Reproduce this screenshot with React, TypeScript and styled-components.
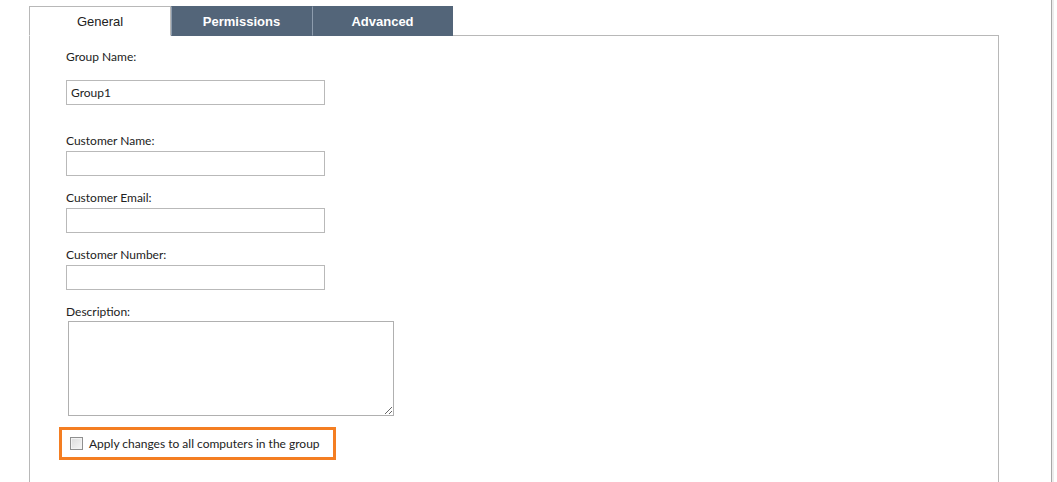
import styled, { createGlobalStyle } from "styled-components";

const GlobalStyle = createGlobalStyle`
  html, body {
    margin: 0;
    padding: 0;
    background: #ffffff;
  }
  body {
    font-family: "Segoe UI", Lato, "Open Sans", sans-serif;
  }
`;

const Page = styled.div`
  width: 1052px;
  min-height: 482px;
  padding: 6px 0 0 29px;
  box-sizing: border-box;
  border-right: 1px solid #a8a8a8;
  box-shadow: 2px 0 0 #ececec;
`;

const TabBar = styled.div`
  display: flex;
  position: relative;
  z-index: 1;
  margin-bottom: -1px;
`;

const Tab = styled.div<{ $active?: boolean }>`
  width: ${(p) => (p.$active ? "142px" : "141px")};
  height: 30px;
  box-sizing: border-box;
  display: flex;
  align-items: center;
  justify-content: center;
  font-family: "Liberation Sans", Arial, sans-serif;
  font-size: 13px;
  padding-top: 1px;
  background: ${(p) => (p.$active ? "#ffffff" : "#536579")};
  color: ${(p) => (p.$active ? "#222222" : "#ffffff")};
  font-weight: ${(p) => (p.$active ? "normal" : "bold")};
  border: 1px solid ${(p) => (p.$active ? "#b8b8b8" : "#536579")};
  border-bottom-color: ${(p) => (p.$active ? "#ffffff" : "#536579")};
  & + & {
    border-left-color: #8d9cad;
  }
`;

const Panel = styled.div`
  width: 970px;
  min-height: 450px;
  box-sizing: border-box;
  border: 1px solid #b8b8b8;
  border-bottom: none;
  padding: 13px 0 0 36px;
  font-size: 12px;
  color: #222222;
`;

const Field = styled.div<{ $gap: number; $after: number }>`
  display: flex;
  flex-direction: column;
  align-items: flex-start;
  gap: ${(p) => p.$gap}px;
  margin-bottom: ${(p) => p.$after}px;
`;

const Label = styled.label`
  line-height: 16px;
`;

const TextInput = styled.input`
  width: 259px;
  height: 25px;
  box-sizing: border-box;
  border: 1px solid #b9b9b9;
  padding: 0 4px;
  font-family: inherit;
  font-size: 12px;
  color: #222222;
  outline: none;
`;

const TextArea = styled.textarea`
  width: 326px;
  height: 95px;
  box-sizing: border-box;
  margin-left: 2px;
  border: 1px solid #b0b0b0;
  resize: both;
  font-family: inherit;
  outline: none;
`;

const Highlight = styled.label`
  width: 277px;
  height: 33px;
  box-sizing: border-box;
  margin-left: -7px;
  border: 3px solid #f47e22;
  display: flex;
  align-items: center;
  gap: 6px;
  padding-left: 8px;
  font-size: 12px;
  white-space: nowrap;
`;

const Box = styled.span`
  width: 13px;
  height: 13px;
  box-sizing: border-box;
  border: 1px solid #8f8f8f;
  background: linear-gradient(135deg, #dcdcdc, #f6f6f6);
  box-shadow: inset 0 0 0 1px #f3f3f3;
  flex: none;
`;

export default function App() {
  return (
    <>
      <GlobalStyle />
      <Page>
        <TabBar>
          <Tab $active>General</Tab>
          <Tab>Permissions</Tab>
          <Tab>Advanced</Tab>
        </TabBar>
        <Panel>
          <Field $gap={15} $after={28}>
            <Label>Group Name:</Label>
            <TextInput defaultValue="Group1" />
          </Field>
          <Field $gap={2} $after={14}>
            <Label>Customer Name:</Label>
            <TextInput />
          </Field>
          <Field $gap={2} $after={14}>
            <Label>Customer Email:</Label>
            <TextInput />
          </Field>
          <Field $gap={2} $after={14}>
            <Label>Customer Number:</Label>
            <TextInput />
          </Field>
          <Field $gap={1} $after={11}>
            <Label>Description:</Label>
            <TextArea />
          </Field>
          <Highlight>
            <Box />
            Apply changes to all computers in the group
          </Highlight>
        </Panel>
      </Page>
    </>
  );
}
